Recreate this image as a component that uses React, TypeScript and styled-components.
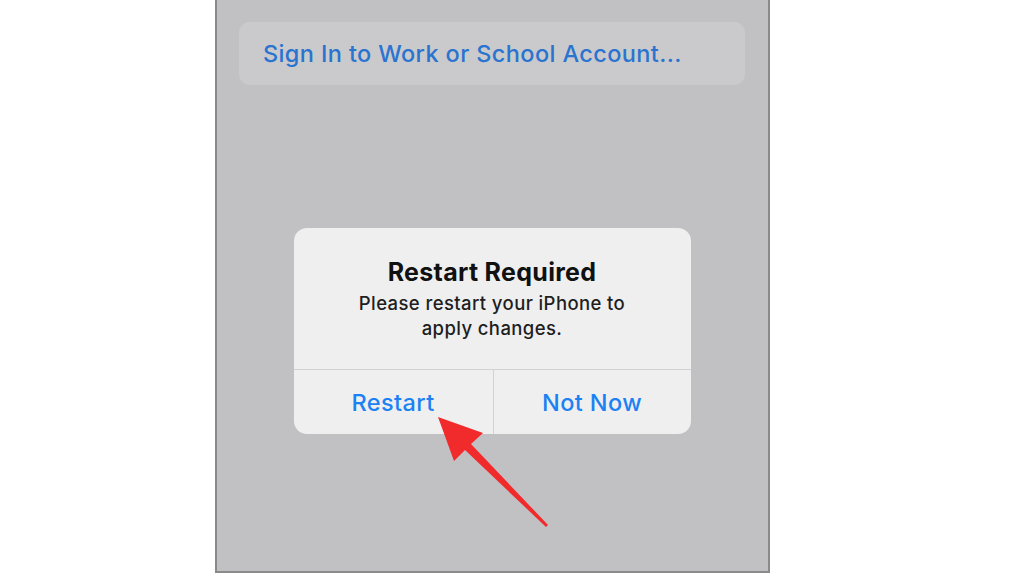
import styled, { createGlobalStyle } from "styled-components";

const GlobalStyle = createGlobalStyle`
  html, body {
    margin: 0;
    padding: 0;
    background: #ffffff;
  }
  body {
    font-family: Inter, "Liberation Sans", Arial, sans-serif;
  }
`;

const Page = styled.div`
  position: relative;
  width: 1024px;
  height: 576px;
  overflow: hidden;
  display: flex;
  align-items: flex-start;
  padding-left: 215px;
  box-sizing: border-box;
`;

const Screen = styled.div`
  width: 555px;
  height: 573px;
  box-sizing: border-box;
  background: #c1c1c4;
  border: 2px solid #8a8a8a;
  border-top: none;
  display: flex;
  flex-direction: column;
  align-items: center;
  padding: 22px 23px 0 22px;
`;

const AccountRow = styled.div`
  width: 100%;
  height: 63px;
  border-radius: 11px;
  background: #cacacc;
  display: flex;
  align-items: center;
  padding-left: 24px;
  box-sizing: border-box;
  font-size: 23.5px;
  font-weight: 500;
  color: #2a74d0;
  letter-spacing: 0.38px;
`;

const Alert = styled.div`
  margin-top: 143px;
  width: 397px;
  border-radius: 13px;
  background: #efeff0;
  display: flex;
  flex-direction: column;
  overflow: hidden;
`;

const AlertBody = styled.div`
  height: 141px;
  display: flex;
  flex-direction: column;
  align-items: center;
  padding-top: 29px;
  box-sizing: border-box;
  text-align: center;
`;

const Title = styled.div`
  font-size: 25px;
  font-weight: 700;
  color: #111111;
  line-height: 30px;
  letter-spacing: 0.3px;
`;

const Message = styled.div`
  margin-top: 4px;
  font-size: 18.5px;
  font-weight: 500;
  color: #1e1e1e;
  line-height: 25px;
  letter-spacing: 0.4px;
  width: 300px;
`;

const Actions = styled.div`
  display: grid;
  grid-template-columns: 200px 1fr;
  border-top: 1px solid #d2d2d5;
  height: 64px;
`;

const Action = styled.div<{ $first?: boolean }>`
  display: flex;
  align-items: center;
  justify-content: center;
  font-size: 23.5px;
  font-weight: 500;
  letter-spacing: 0.4px;
  color: #1c82f4;
  border-right: ${(p) => (p.$first ? "1px solid #d2d2d5" : "none")};
`;

const Pointer = styled.svg`
  position: absolute;
  left: 0;
  top: 0;
  width: 1024px;
  height: 576px;
  pointer-events: none;
`;

export default function App() {
  return (
    <>
      <GlobalStyle />
      <Page>
        <Screen>
          <AccountRow>Sign In to Work or School Account...</AccountRow>
          <Alert>
            <AlertBody>
              <Title>Restart Required</Title>
              <Message>Please restart your iPhone to apply changes.</Message>
            </AlertBody>
            <Actions>
              <Action $first>Restart</Action>
              <Action>Not Now</Action>
            </Actions>
          </Alert>
        </Screen>
        <Pointer viewBox="0 0 1024 576">
          <polygon
            points="438,417 483,433 471,444 548,525 546,527 465,450 454,461"
            fill="#f12b2b"
          />
        </Pointer>
      </Page>
    </>
  );
}
